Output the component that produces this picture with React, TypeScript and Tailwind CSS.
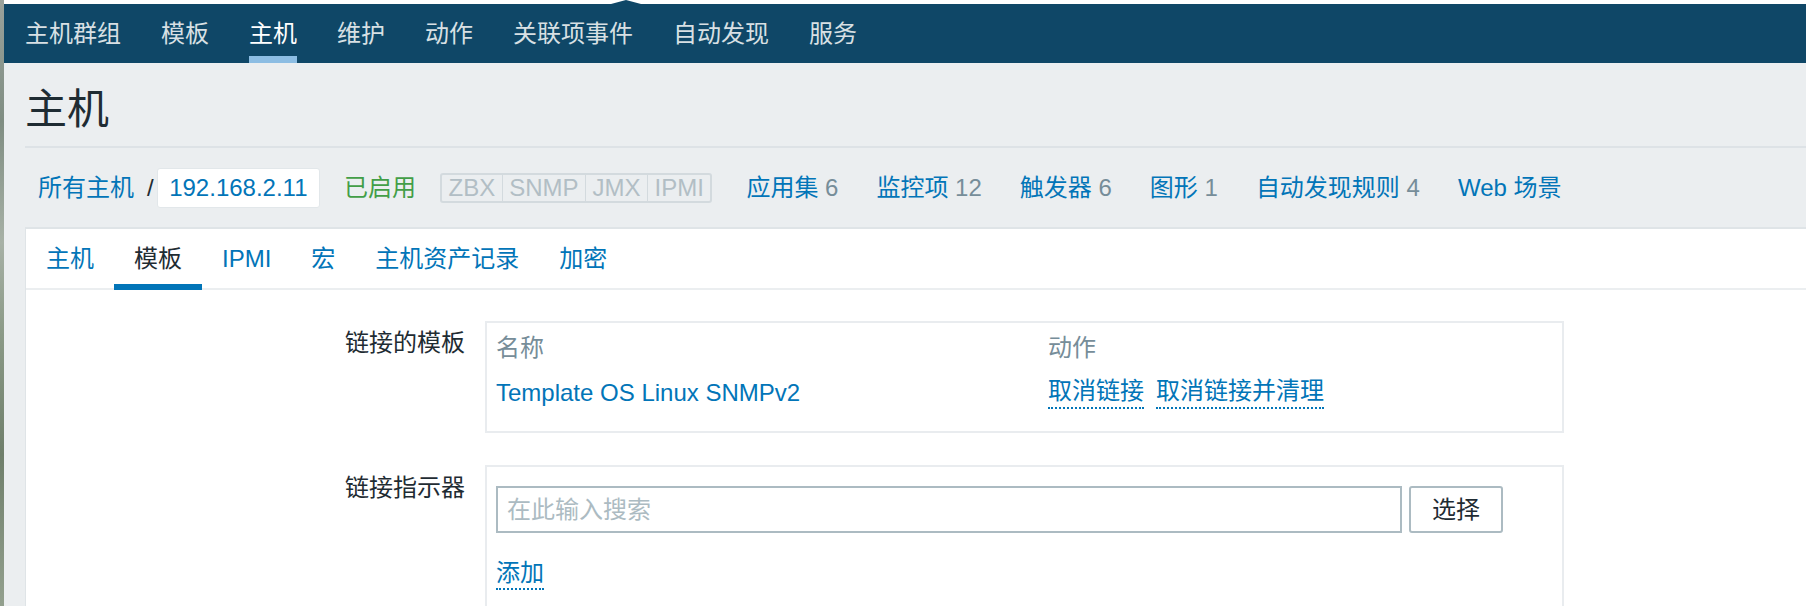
import React from "react";

const navItems = ["主机群组", "模板", "主机", "维护", "动作", "关联项事件", "自动发现", "服务"];
const tabs = ["主机", "模板", "IPMI", "宏", "主机资产记录", "加密"];
const counts: [string, string][] = [
  ["应用集", "6"],
  ["监控项", "12"],
  ["触发器", "6"],
  ["图形", "1"],
  ["自动发现规则", "4"],
];

export default function App() {
  return (
    <div className="flex w-[1806px] h-[606px] overflow-hidden bg-[#ebeef0] font-['Liberation_Sans','Noto_Sans_CJK_SC',sans-serif] text-[24px] leading-[24px] text-[#1f2c33]">
      <div className="w-[4px] shrink-0 bg-[linear-gradient(180deg,#9aa29c_0%,#7f8d82_20%,#a7b1a6_40%,#8b9a87_55%,#6f7f6b_75%,#93a08e_100%)]" />
      <div className="flex-1 min-w-0 flex flex-col">
        <div className="relative h-[4px] bg-white shrink-0">
          <div className="absolute left-[607px] top-0 w-0 h-0 border-l-[15px] border-r-[15px] border-b-[4px] border-l-transparent border-r-transparent border-b-[#0f4767]" />
        </div>
        <nav className="h-[59px] shrink-0 bg-[#0f4767] flex items-stretch pl-[21px] gap-[40px]">
          {navItems.map((n, i) => (
            <div
              key={n}
              className={`relative flex items-center ${i === 2 ? "text-white" : "text-[#d8e0e4]"}`}
            >
              {n}
              {i === 2 && <div className="absolute left-0 right-0 bottom-0 h-[7px] bg-[#8cbde3]" />}
            </div>
          ))}
        </nav>

        <div className="h-[83px] shrink-0 pl-[21px] pt-[26px]">
          <h1 className="text-[42px] leading-[42px] text-[#1f2c33]">主机</h1>
        </div>
        <div className="h-[2px] shrink-0 ml-[21px] bg-[#dde2e6]" />

        <div className="h-[79px] shrink-0 flex items-center pl-[34px]">
          <span className="text-[#0275b8]">所有主机</span>
          <span className="ml-[13px] mr-[3px] text-[#1f2c33]">/</span>
          <span className="h-[40px] flex items-center bg-white border border-[#e2e7ea] rounded-[3px] px-[11.5px] text-[#0275b8]">
            192.168.2.11
          </span>
          <span className="ml-[24px] text-[#429e47]">已启用</span>
          <div className="ml-[24px] flex h-[30px] items-stretch border-2 border-[#d3dade] rounded-[3px] text-[#b2bec5]">
            {["ZBX", "SNMP", "JMX", "IPMI"].map((t, i) => (
              <span
                key={t}
                className={`flex items-center px-[6.5px] ${i > 0 ? "border-l border-[#d3dade]" : ""}`}
              >
                {t}
              </span>
            ))}
          </div>
          <div className="ml-[34px] flex items-center gap-[38px]">
            {counts.map(([a, b]) => (
              <span key={a} className="text-[#0275b8]">
                {a} <span className="text-[#768d99]">{b}</span>
              </span>
            ))}
            <span className="text-[#0275b8]">Web 场景</span>
          </div>
        </div>

        <div className="flex-1 ml-[21px] bg-white border-l border-t-2 border-[#dfe4e7]">
          <div className="h-[61px] flex border-b-2 border-[#ebeef0]">
            {tabs.map((t, i) => (
              <div
                key={t}
                className={`relative flex items-center px-[20px] ${i === 1 ? "text-[#1f2c33]" : "text-[#0275b8]"}`}
              >
                {t}
                {i === 1 && <div className="absolute left-0 right-0 -bottom-[2px] h-[6px] bg-[#0275b8]" />}
              </div>
            ))}
          </div>

          <div className="pt-[31px]">
            <div className="flex">
              <div className="w-[439px] shrink-0 text-right pt-[10px]">链接的模板</div>
              <div className="ml-[20px] w-[1079px] border-2 border-[#e9ecef] px-[9px] pt-[4px] pb-[13px]">
                <div className="grid grid-cols-[552px_1fr] h-[41px] items-center text-[#768d99]">
                  <span>名称</span>
                  <span>动作</span>
                </div>
                <div className="grid grid-cols-[552px_1fr] h-[50px] items-center">
                  <span className="text-[#0275b8]">Template OS Linux SNMPv2</span>
                  <div className="flex items-start">
                    <span className="text-[#0275b8] pt-[2px] pb-[4px] border-b-2 border-dotted border-[#0275b8]">取消链接</span>
                    <span className="ml-[12px] text-[#0275b8] pt-[2px] pb-[4px] border-b-2 border-dotted border-[#0275b8]">取消链接并清理</span>
                  </div>
                </div>
              </div>
            </div>

            <div className="flex mt-[32px]">
              <div className="w-[439px] shrink-0 text-right pt-[11px]">链接指示器</div>
              <div className="ml-[20px] w-[1079px] h-[160px] border-2 border-b-0 border-[#e9ecef] px-[9px] pt-[19px]">
                <div className="flex gap-[7px]">
                  <input
                    className="w-[906px] h-[47px] border-2 border-[#acbbc2] px-[9px] outline-none text-[24px] placeholder:text-[#acbbc2]"
                    placeholder="在此输入搜索"
                  />
                  <button className="w-[94px] h-[47px] border-2 border-[#acbbc2] rounded-[3px] bg-white text-[#1f2c33] text-[24px]">
                    选择
                  </button>
                </div>
                <div className="mt-[28px]">
                  <span className="inline-block text-[#0275b8] pb-[3px] border-b-2 border-dotted border-[#0275b8]">添加</span>
                </div>
              </div>
            </div>
          </div>
        </div>
      </div>
    </div>
  );
}
